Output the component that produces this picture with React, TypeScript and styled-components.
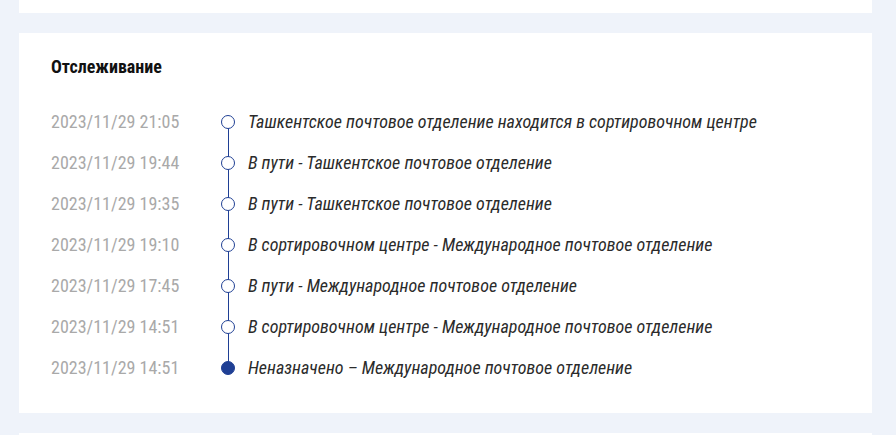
import styled, { createGlobalStyle } from "styled-components";

const palette = {
  page: "#eff3fa",
  card: "#ffffff",
  title: "#111111",
  date: "#a9a9a9",
  text: "#2b2b2b",
  line: "#1f3f94",
};

const GlobalStyle = createGlobalStyle`
  html, body {
    margin: 0;
    padding: 0;
    background: ${palette.page};
  }
  body {
    font-family: "Roboto Condensed", "Liberation Sans Narrow", Roboto, sans-serif;
    font-stretch: condensed;
  }
`;

const Page = styled.main`
  display: flex;
  flex-direction: column;
  gap: 20px;
  padding: 0 24px 0 19px;
`;

const Card = styled.section<{ $h: number }>`
  background: ${palette.card};
  height: ${(p) => p.$h}px;
`;

const TrackCard = styled.section`
  background: ${palette.card};
  padding: 24px 32px 25px;
`;

const Title = styled.h2`
  margin: 0 0 24px;
  font-size: 18px;
  font-weight: 700;
  line-height: 20px;
  color: ${palette.title};
`;

const Timeline = styled.ol`
  list-style: none;
  margin: 0;
  padding: 0;
`;

const Row = styled.li`
  display: grid;
  grid-template-columns: 170px 14px 1fr;
  align-items: center;
  height: 41px;
`;

const Date = styled.span`
  font-size: 18px;
  color: ${palette.date};
`;

const Rail = styled.div<{ $first?: boolean; $last?: boolean }>`
  position: relative;
  height: 100%;
  display: flex;
  align-items: center;
  justify-content: center;

  &::before {
    content: "";
    position: absolute;
    left: 50%;
    width: 1px;
    margin-left: -0.5px;
    top: ${(p) => (p.$first ? "50%" : "0")};
    bottom: ${(p) => (p.$last ? "50%" : "0")};
    background: ${palette.line};
  }
`;

const Dot = styled.span<{ $filled?: boolean }>`
  position: relative;
  box-sizing: border-box;
  width: 14px;
  height: 14px;
  border-radius: 50%;
  border: 1.3px solid ${palette.line};
  background: ${(p) => (p.$filled ? palette.line : palette.card)};
`;

const Event = styled.span`
  font-size: 18px;
  font-style: italic;
  color: ${palette.text};
  padding-left: 13px;
  white-space: nowrap;
`;

const events = [
  ["2023/11/29 21:05", "Ташкентское почтовое отделение находится в сортировочном центре"],
  ["2023/11/29 19:44", "В пути - Ташкентское почтовое отделение"],
  ["2023/11/29 19:35", "В пути - Ташкентское почтовое отделение"],
  ["2023/11/29 19:10", "В сортировочном центре - Международное почтовое отделение"],
  ["2023/11/29 17:45", "В пути - Международное почтовое отделение"],
  ["2023/11/29 14:51", "В сортировочном центре - Международное почтовое отделение"],
  ["2023/11/29 14:51", "Неназначено – Международное почтовое отделение"],
];

export default function App() {
  return (
    <>
      <GlobalStyle />
      <Page>
        <Card $h={13} />
        <TrackCard>
          <Title>Отслеживание</Title>
          <Timeline>
            {events.map(([date, text], i) => (
              <Row key={i}>
                <Date>{date}</Date>
                <Rail $first={i === 0} $last={i === events.length - 1}>
                  <Dot $filled={i === events.length - 1} />
                </Rail>
                <Event>{text}</Event>
              </Row>
            ))}
          </Timeline>
        </TrackCard>
        <Card $h={3} />
      </Page>
    </>
  );
}
